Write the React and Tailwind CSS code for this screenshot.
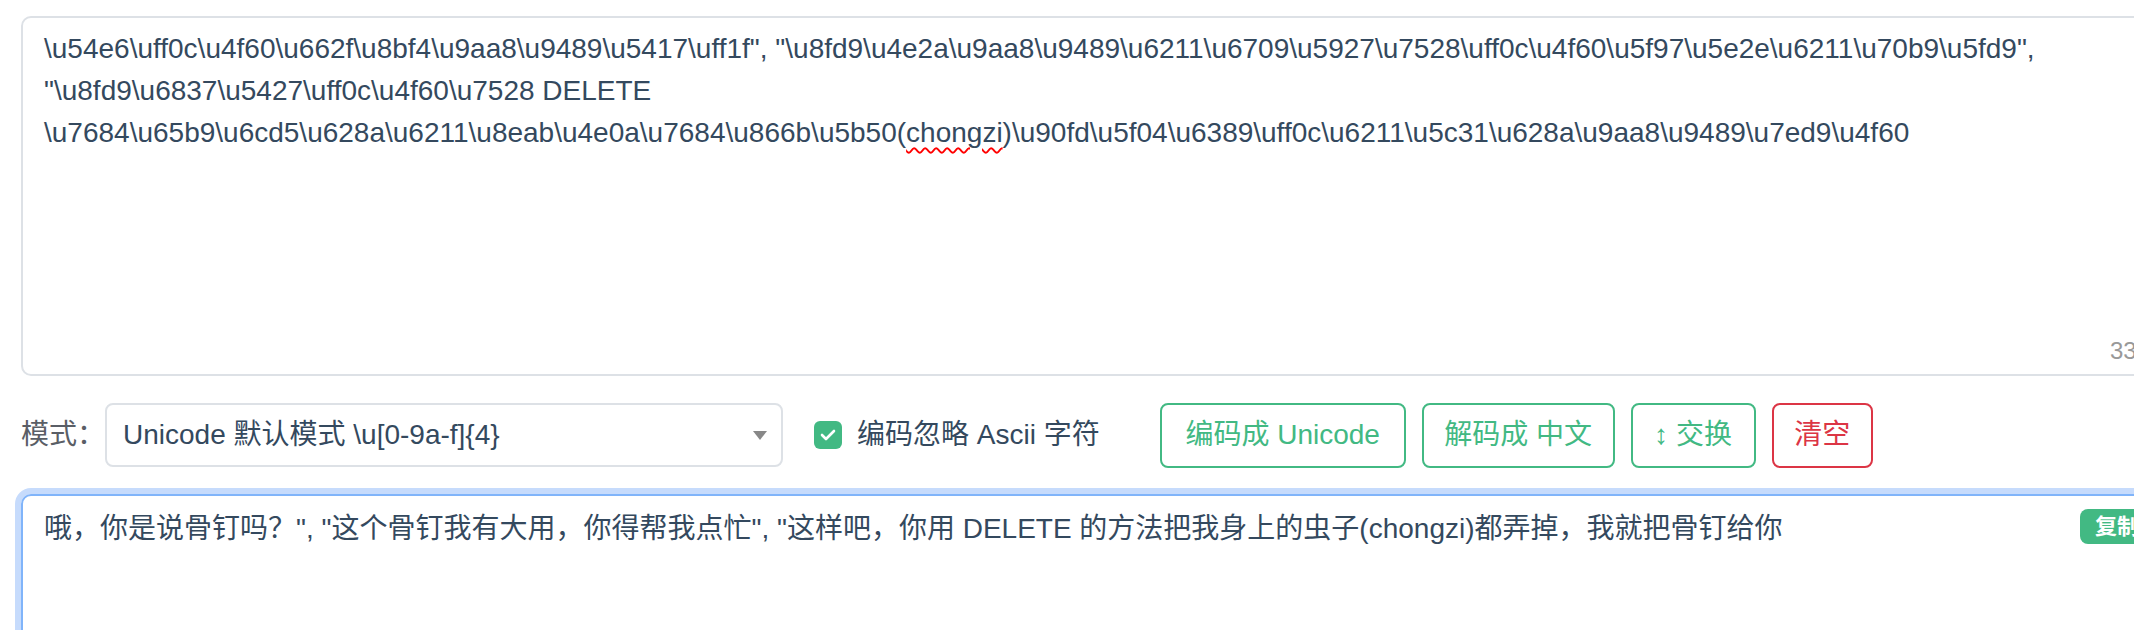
import React from 'react';

const line1 = '\\u54e6\\uff0c\\u4f60\\u662f\\u8bf4\\u9aa8\\u9489\\u5417\\uff1f", "\\u8fd9\\u4e2a\\u9aa8\\u9489\\u6211\\u6709\\u5927\\u7528\\uff0c\\u4f60\\u5f97\\u5e2e\\u6211\\u70b9\\u5fd9",';
const line2 = '"\\u8fd9\\u6837\\u5427\\uff0c\\u4f60\\u7528 DELETE';
const line3a = '\\u7684\\u65b9\\u6cd5\\u628a\\u6211\\u8eab\\u4e0a\\u7684\\u866b\\u5b50(';
const line3b = ')\\u90fd\\u5f04\\u6389\\uff0c\\u6211\\u5c31\\u628a\\u9aa8\\u9489\\u7ed9\\u4f60';

const decoded = '哦，你是说骨钉吗？", "这个骨钉我有大用，你得帮我点忙", "这样吧，你用 DELETE 的方法把我身上的虫子(chongzi)都弄掉，我就把骨钉给你';

const buttons = [
  { label: '编码成 Unicode', w: 'w-[246px]', tone: 'green' },
  { label: '解码成 中文', w: 'w-[193px]', tone: 'green' },
  { label: '↕ 交换', w: 'w-[125px]', tone: 'green' },
  { label: '清空', w: 'w-[101px]', tone: 'red' },
];

export default function App() {
  return (
    <div className="w-[2134px] h-[630px] overflow-hidden bg-white font-['Liberation_Sans','Noto_Sans_CJK_SC',sans-serif] text-[28px] leading-[42px] text-[#34495e]">
      <div className="w-[2200px] pt-4 pl-[21px]">
        {/* source textarea */}
        <div className="relative h-[360px] w-[2160px] rounded-[10px] border-2 border-[#dde1e6] pt-[10px] pl-[21px] whitespace-pre">
          <div>{line1}</div>
          <div>{line2}</div>
          <div>
            {line3a}
            <span className="underline decoration-wavy decoration-[#f00] decoration-2 underline-offset-[5px]">chongzi</span>
            {line3b}
          </div>
          <span className="absolute left-[2087px] top-[321px] text-[24px] leading-none text-[#999]">33</span>
        </div>

        {/* options row */}
        <div className="mt-[27px] flex h-[64px] items-center">
          <span className="w-[84px] text-[#5a5e66]">模式：</span>
          <div className="flex h-[64px] w-[678px] items-center justify-between rounded-[8px] border-2 border-[#dde1e6] pl-4 pr-[14px]">
            <span>Unicode 默认模式 \u[0-9a-f]{'{4}'}</span>
            <svg width="14" height="9" viewBox="0 0 14 9">
              <path d="M0 0 L14 0 L7 9 Z" fill="#888" />
            </svg>
          </div>
          <div className="ml-[31px] flex h-[28px] w-[28px] items-center justify-center rounded-[6px] bg-[#42b983]">
            <svg width="16" height="12" viewBox="0 0 16 12">
              <path d="M2 6 L6 10 L14 2" fill="none" stroke="#fff" strokeWidth="2.6" strokeLinecap="round" strokeLinejoin="round" />
            </svg>
          </div>
          <span className="ml-[15px]">编码忽略 Ascii 字符</span>
          <div className="ml-[60px] flex gap-4">
            {buttons.map((b) => (
              <button
                key={b.label}
                className={`${b.w} h-[65px] rounded-[8px] border-2 bg-white text-center ${
                  b.tone === 'red' ? 'border-[#dc3545] text-[#dc3545]' : 'border-[#42b983] text-[#42b983]'
                }`}
              >
                {b.label}
              </button>
            ))}
          </div>
        </div>

        {/* result textarea */}
        <div className="relative mt-[27px] h-[200px] w-[2160px] rounded-[10px] border-2 border-[#80b4fa] pt-[12px] pl-[21px] ring-[6px] ring-[#c6dbfc] whitespace-pre">
          <div>{decoded}</div>
          <span className="absolute left-[2057px] top-[13px] flex h-[35px] items-center rounded-[8px] bg-[#42b983] px-[15px] text-[22px] font-bold leading-none text-white">
            复制
          </span>
        </div>
      </div>
    </div>
  );
}
